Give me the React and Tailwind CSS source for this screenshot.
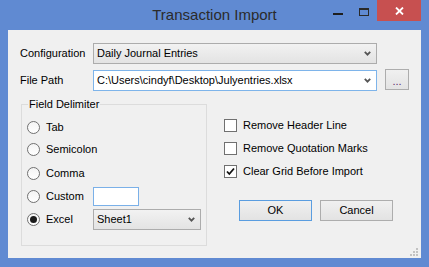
import React from 'react';

const Chevron = () => (
  <svg width="7" height="5" viewBox="0 0 7 5" className="shrink-0">
    <path d="M0.8 0.8 L3.5 3.6 L6.2 0.8" fill="none" stroke="#555" strokeWidth="1.8" />
  </svg>
);

const Combo = ({ value, className }) => (
  <div className={`flex items-center justify-between pl-[3px] pr-[5px] ${className}`}>
    <span className="whitespace-nowrap">{value}</span>
    <Chevron />
  </div>
);

const Radio = ({ checked }) => (
  <div className="w-[13px] h-[13px] rounded-full border border-[#707070] bg-gradient-to-b from-[#f4f4f4] to-white flex items-center justify-center shrink-0">
    {checked && <div className="w-[7px] h-[7px] rounded-full bg-[#1a1a1a]" />}
  </div>
);

const Check = ({ checked }) => (
  <div className="w-[13px] h-[13px] border border-[#707070] bg-white flex items-center justify-center shrink-0">
    {checked && (
      <svg width="9" height="9" viewBox="0 0 9 9">
        <path d="M1 4.5 L3.3 7 L8 1.5" fill="none" stroke="#111" strokeWidth="1.8" />
      </svg>
    )}
  </div>
);

const RadioRow = ({ label, checked, h, children }) => (
  <div className={`flex items-center ${h}`}>
    <div className="w-[66px] flex items-center gap-[6px]">
      <Radio checked={checked} />
      <span>{label}</span>
    </div>
    {children}
  </div>
);

const CheckRow = ({ label, checked }) => (
  <div className="flex items-center h-[23px] gap-[6px]">
    <Check checked={checked} />
    <span className="whitespace-nowrap">{label}</span>
  </div>
);

const App = () => {
  return (
    <div className="w-[429px] h-[267px] bg-[#608ad2] flex flex-col font-['Liberation_Sans',Arial,sans-serif] text-[11px] text-black">
      {/* Title bar */}
      <div className="h-[30px] grid grid-cols-[1fr_auto_1fr] shrink-0">
        <div />
        <div className="flex items-center text-[15px] text-[#2b2b2b]">Transaction Import</div>
        <div className="flex justify-end items-start pr-[8px]">
          <div className="w-[26px] h-[21px] flex justify-center pt-[13px]">
            <div className="w-[10px] h-[2px] bg-[#1e1e1e]" />
          </div>
          <div className="w-[26px] h-[21px] flex justify-center pt-[8px]">
            <div className="w-[10px] h-[8px] border border-t-2 border-[#2a2a2a]" />
          </div>
          <div className="w-[44px] h-[21px] bg-[#c75050] flex items-center justify-center">
            <svg width="9" height="8" viewBox="0 0 9 8">
              <path d="M1 0.5 L8 7.5 M8 0.5 L1 7.5" stroke="#fff" strokeWidth="1.8" />
            </svg>
          </div>
        </div>
      </div>

      {/* Client area */}
      <div className="mx-[8px] h-[228px] bg-[#f0f0f0] relative flex flex-col pt-[13px] pl-[12px]">
        <div className="flex items-center h-[21px]">
          <span className="w-[73px]">Configuration</span>
          <Combo
            value="Daily Journal Entries"
            className="w-[284px] h-[21px] border border-[#acacac] bg-gradient-to-b from-[#f2f2f2] to-[#e3e3e3]"
          />
        </div>

        <div className="flex items-center h-[21px] mt-[6px]">
          <span className="w-[73px]">File Path</span>
          <Combo
            value="C:\Users\cindyf\Desktop\Julyentries.xlsx"
            className="w-[284px] h-[21px] border border-[#7eb4ea] bg-white"
          />
          <div className="ml-[8px] -mt-[2px] w-[24px] h-[21px] border border-[#adadad] bg-gradient-to-b from-[#f0f0f0] to-[#e3e3e3] flex items-center justify-center text-[#5a2a6a] leading-none pt-[3px]">
            ...
          </div>
        </div>

        <div className="flex mt-[13px]">
          {/* Field Delimiter group */}
          <div className="ml-[1px] w-[186px] h-[142px] border border-[#dcdcdc] relative pt-[11px] pl-[5px]">
            <span className="absolute left-[6px] -top-[7px] px-[1px] bg-[#f0f0f0] leading-[13px]">Field Delimiter</span>
            <RadioRow label="Tab" h="h-[22px]" />
            <RadioRow label="Semicolon" h="h-[23px]" />
            <RadioRow label="Comma" h="h-[24px]" />
            <RadioRow label="Custom" h="h-[23px]">
              <div className="w-[46px] h-[19px] border border-[#7ab0e8] bg-white" />
            </RadioRow>
            <RadioRow label="Excel" checked h="h-[23px]">
              <Combo
                value="Sheet1"
                className="w-[108px] h-[21px] border border-[#acacac] bg-gradient-to-b from-[#f2f2f2] to-[#e3e3e3]"
              />
            </RadioRow>
          </div>

          {/* Options */}
          <div className="ml-[17px] pt-[10px] flex flex-col">
            <CheckRow label="Remove Header Line" />
            <CheckRow label="Remove Quotation Marks" />
            <CheckRow label="Clear Grid Before Import" checked />
            <div className="flex gap-[8px] mt-[17px] ml-[15px]">
              <div className="w-[73px] h-[21px] border border-[#5a9de0] bg-gradient-to-b from-[#f0f0f0] to-[#e3e3e3] flex items-center justify-center">OK</div>
              <div className="w-[73px] h-[21px] border border-[#adadad] bg-gradient-to-b from-[#f0f0f0] to-[#e3e3e3] flex items-center justify-center">Cancel</div>
            </div>
          </div>
        </div>

        {/* size grip */}
        <svg width="9" height="9" viewBox="0 0 9 9" className="absolute right-[2px] bottom-[1px]">
          <rect x="6" y="0" width="2" height="2" fill="#c2c2c2" />
          <rect x="3" y="3" width="2" height="2" fill="#c2c2c2" />
          <rect x="6" y="3" width="2" height="2" fill="#c2c2c2" />
          <rect x="0" y="6" width="2" height="2" fill="#c2c2c2" />
          <rect x="3" y="6" width="2" height="2" fill="#c2c2c2" />
          <rect x="6" y="6" width="2" height="2" fill="#c2c2c2" />
        </svg>
      </div>
    </div>
  );
};

export default App;
